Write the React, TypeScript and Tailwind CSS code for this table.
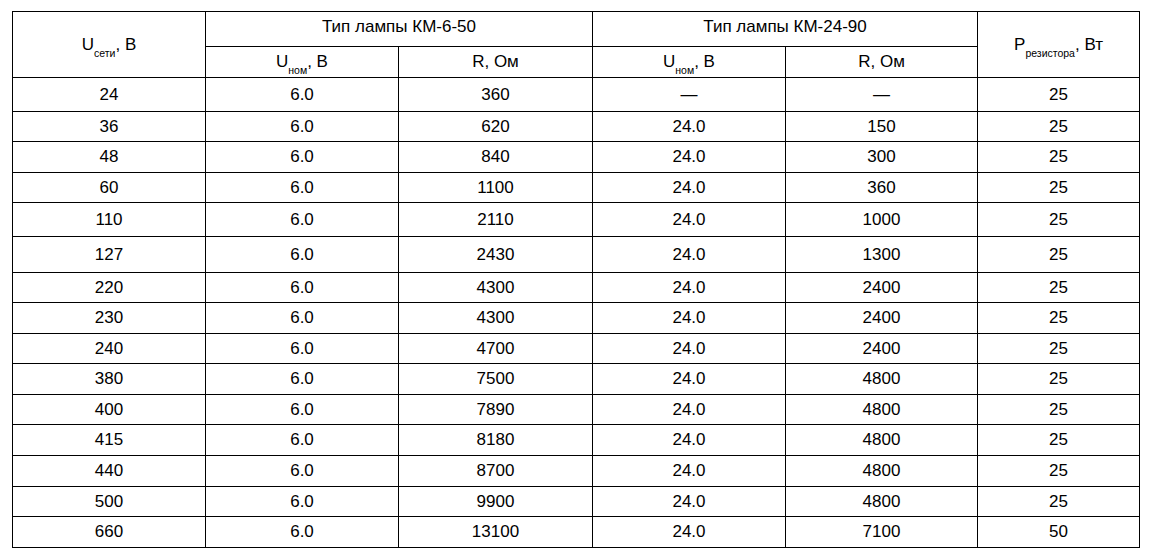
import React from "react";

const rows: [string, string, string, string, string, string, number][] = [
  ["24", "6.0", "360", "—", "—", "25", 34],
  ["36", "6.0", "620", "24.0", "150", "25", 30],
  ["48", "6.0", "840", "24.0", "300", "25", 31],
  ["60", "6.0", "1100", "24.0", "360", "25", 30],
  ["110", "6.0", "2110", "24.0", "1000", "25", 34],
  ["127", "6.0", "2430", "24.0", "1300", "25", 36],
  ["220", "6.0", "4300", "24.0", "2400", "25", 30],
  ["230", "6.0", "4300", "24.0", "2400", "25", 31],
  ["240", "6.0", "4700", "24.0", "2400", "25", 30],
  ["380", "6.0", "7500", "24.0", "4800", "25", 31],
  ["400", "6.0", "7890", "24.0", "4800", "25", 30],
  ["415", "6.0", "8180", "24.0", "4800", "25", 31],
  ["440", "6.0", "8700", "24.0", "4800", "25", 31],
  ["500", "6.0", "9900", "24.0", "4800", "25", 30],
  ["660", "6.0", "13100", "24.0", "7100", "50", 31],
];

function Sub({ children }: { children: React.ReactNode }) {
  return (
    <span className="relative top-[7px] text-[10.5px] leading-none">{children}</span>
  );
}

export default function App() {
  const cell = "border border-black p-0 text-center align-middle font-normal";
  return (
    <div
      className="w-[1152px] h-[555px] bg-white pt-[11px] pl-[12px] text-black text-[17px]"
      style={{ fontFamily: '"Liberation Sans", Arial, sans-serif' }}
    >
      <table className="table-fixed border-collapse w-[1127px]">
        <colgroup>
          <col className="w-[193px]" />
          <col className="w-[193px]" />
          <col className="w-[194px]" />
          <col className="w-[193px]" />
          <col className="w-[192px]" />
          <col className="w-[162px]" />
        </colgroup>
        <thead>
          <tr className="h-[35px]">
            <th rowSpan={2} className={cell}>
              U<Sub>сети</Sub>, В
            </th>
            <th colSpan={2} className={`${cell} pb-[4px]`}>
              Тип лампы КМ-6-50
            </th>
            <th colSpan={2} className={`${cell} pb-[4px]`}>
              Тип лампы КМ-24-90
            </th>
            <th rowSpan={2} className={cell}>
              P<Sub>резистора</Sub>, Вт
            </th>
          </tr>
          <tr className="h-[31px]">
            <th className={cell}>
              U<Sub>ном</Sub>, В
            </th>
            <th className={cell}>R, Ом</th>
            <th className={cell}>
              U<Sub>ном</Sub>, В
            </th>
            <th className={cell}>R, Ом</th>
          </tr>
        </thead>
        <tbody>
          {rows.map((r) => (
            <tr key={r[0]} style={{ height: r[6] }}>
              {r.slice(0, 6).map((v, i) => (
                <td key={i} className={cell}>
                  {v}
                </td>
              ))}
            </tr>
          ))}
        </tbody>
      </table>
    </div>
  );
}
